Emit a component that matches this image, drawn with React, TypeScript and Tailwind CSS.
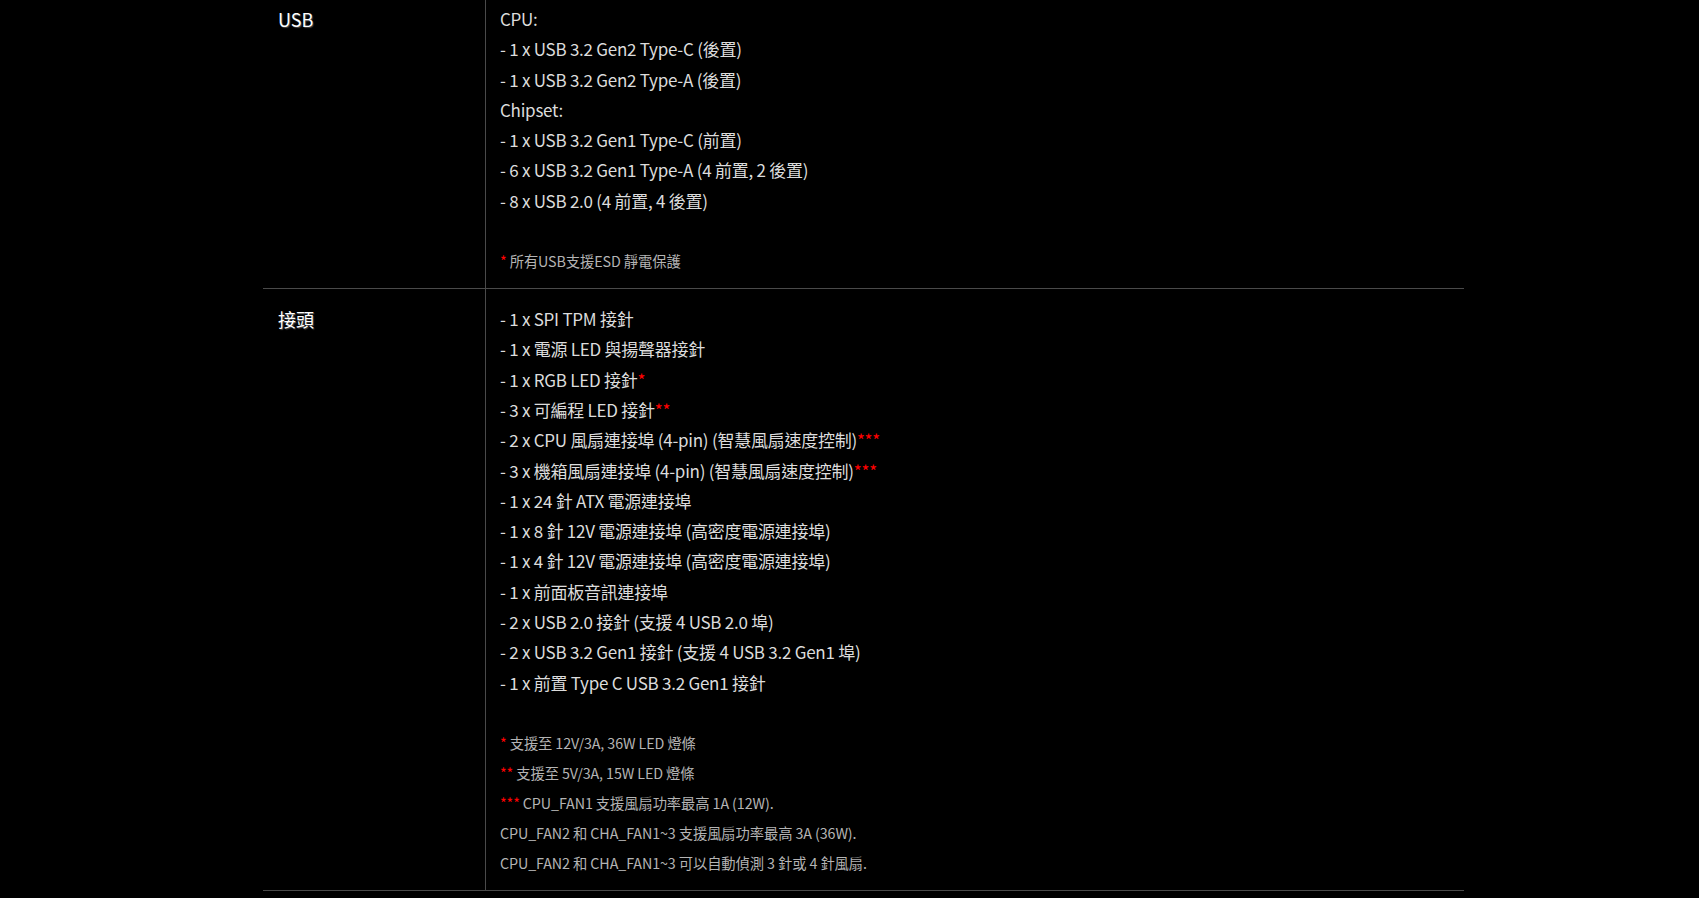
import React from "react";

const R = ({ n }: { n: number }) => (
  <span className="text-[#ff0000]">{"*".repeat(n)}</span>
);

function Row({
  label,
  children,
}: {
  label: string;
  children: React.ReactNode;
}) {
  return (
    <div className="grid grid-cols-[222px_1fr] border-b border-[#4a4a4a]">
      <div className="px-[15px] pt-[15px] pb-[12px] text-[18px] leading-[30px] text-white [text-shadow:1px_1px_1px_rgba(120,120,120,0.6)]">
        {label}
      </div>
      <div className="border-l border-[#4a4a4a] pl-[14px] pt-[15px] pb-[12px] text-[17px] leading-[30.3px] tracking-[-0.25px] text-[#dcdcdc]">
        {children}
      </div>
    </div>
  );
}

const Note = ({ children }: { children: React.ReactNode }) => (
  <div className="text-[14.3px] leading-[30px] tracking-[-0.1px] text-[#b4b4b4]">
    {children}
  </div>
);

export default function App() {
  return (
    <div
      className="min-h-screen bg-black overflow-hidden"
      style={{ fontFamily: '"Noto Sans CJK TC", "Noto Sans", sans-serif' }}
    >
      <div className="ml-[263px] w-[1201px] mt-[-11px]">
        <Row label="USB">
          <div>CPU:</div>
          <div>- 1 x USB 3.2 Gen2 Type-C (後置)</div>
          <div>- 1 x USB 3.2 Gen2 Type-A (後置)</div>
          <div>Chipset:</div>
          <div>- 1 x USB 3.2 Gen1 Type-C (前置)</div>
          <div>- 6 x USB 3.2 Gen1 Type-A (4 前置, 2 後置)</div>
          <div>- 8 x USB 2.0 (4 前置, 4 後置)</div>
          <div className="h-[30px]" />
          <Note>
            <R n={1} /> 所有USB支援ESD 靜電保護
          </Note>
        </Row>
        <Row label="接頭">
          <div>- 1 x SPI TPM 接針</div>
          <div>- 1 x 電源 LED 與揚聲器接針</div>
          <div>
            - 1 x RGB LED 接針<R n={1} />
          </div>
          <div>
            - 3 x 可編程 LED 接針<R n={2} />
          </div>
          <div>
            - 2 x CPU 風扇連接埠 (4-pin) (智慧風扇速度控制)<R n={3} />
          </div>
          <div>
            - 3 x 機箱風扇連接埠 (4-pin) (智慧風扇速度控制)<R n={3} />
          </div>
          <div>- 1 x 24 針 ATX 電源連接埠</div>
          <div>- 1 x 8 針 12V 電源連接埠 (高密度電源連接埠)</div>
          <div>- 1 x 4 針 12V 電源連接埠 (高密度電源連接埠)</div>
          <div>- 1 x 前面板音訊連接埠</div>
          <div>- 2 x USB 2.0 接針 (支援 4 USB 2.0 埠)</div>
          <div>- 2 x USB 3.2 Gen1 接針 (支援 4 USB 3.2 Gen1 埠)</div>
          <div>- 1 x 前置 Type C USB 3.2 Gen1 接針</div>
          <div className="h-[30px]" />
          <Note>
            <R n={1} /> 支援至 12V/3A, 36W LED 燈條
          </Note>
          <Note>
            <R n={2} /> 支援至 5V/3A, 15W LED 燈條
          </Note>
          <Note>
            <R n={3} /> CPU_FAN1 支援風扇功率最高 1A (12W).
          </Note>
          <Note>CPU_FAN2 和 CHA_FAN1~3 支援風扇功率最高 3A (36W).</Note>
          <Note>CPU_FAN2 和 CHA_FAN1~3 可以自動偵測 3 針或 4 針風扇.</Note>
        </Row>
      </div>
    </div>
  );
}
